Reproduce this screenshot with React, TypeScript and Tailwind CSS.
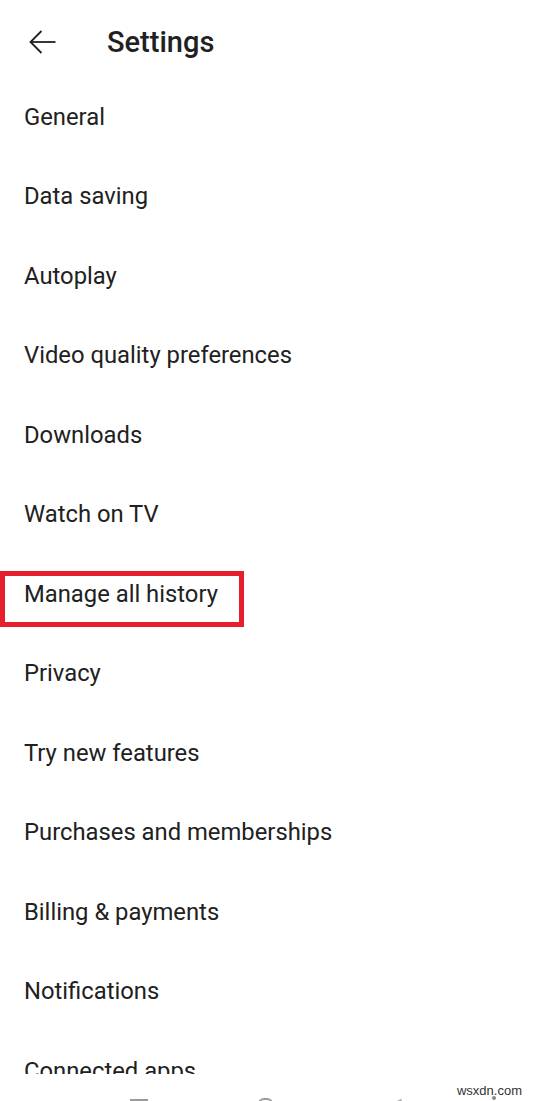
import React from 'react';

const items = [
  'General',
  'Data saving',
  'Autoplay',
  'Video quality preferences',
  'Downloads',
  'Watch on TV',
  'Manage all history',
  'Privacy',
  'Try new features',
  'Purchases and memberships',
  'Billing & payments',
  'Notifications',
  'Connected apps',
];

export default function App() {
  return (
    <div
      className="w-[533px] h-[1101px] bg-white flex flex-col overflow-hidden text-[#212121]"
      style={{ fontFamily: 'Roboto, "Noto Sans", sans-serif' }}
    >
      {/* Header */}
      <div className="h-[78px] shrink-0 flex items-center pt-[6px] pl-[29px]">
        <svg width="27" height="24" viewBox="0 0 27 24" fill="none" stroke="#212121" strokeWidth="1.8">
          <path d="M1.5 12H26.5" />
          <path d="M12.5 1L1.5 12L12.5 23" />
        </svg>
        <h1 className="ml-[51px] text-[29px] font-medium leading-none">Settings</h1>
      </div>

      {/* List */}
      <div className="h-[996px] shrink-0 overflow-hidden">
        {items.map((label) => (
          <div key={label} className="relative h-[79.5px] flex items-center pl-[24px]">
            <span className="text-[23.8px] leading-none">{label}</span>
            {label === 'Manage all history' && (
              <div className="absolute left-0 top-[16px] w-[244px] h-[56px] border-[5px] border-[#e5202c]" />
            )}
          </div>
        ))}
      </div>

      {/* Bottom strip: watermark and clipped nav bar */}
      <div className="flex-1 flex flex-col">
        <div className="flex justify-end pr-[11px] pt-[10px]">
          <span
            className="text-[13px] leading-none text-[#333]"
            style={{ fontFamily: '"Liberation Sans", Arial, sans-serif' }}
          >
            wsxdn.com
          </span>
        </div>
        <div className="flex items-start pl-[130px] pt-[1px]">
          <div className="w-[18px] h-[2px] bg-[#9a9a9a] mt-[1px]" />
          <div className="ml-[110px] w-[15px] h-[8px] rounded-t-[6px] border-2 border-[#9a9a9a]" />
          <div className="ml-[123px] w-[6px] h-[2px] mt-[2px] bg-[#b0b0b0] rotate-[-30deg]" />
          <div className="ml-[90px] w-[4px] h-[4px] -mt-[2px] rounded-full bg-[#8a8a8a]" />
        </div>
      </div>
    </div>
  );
}
